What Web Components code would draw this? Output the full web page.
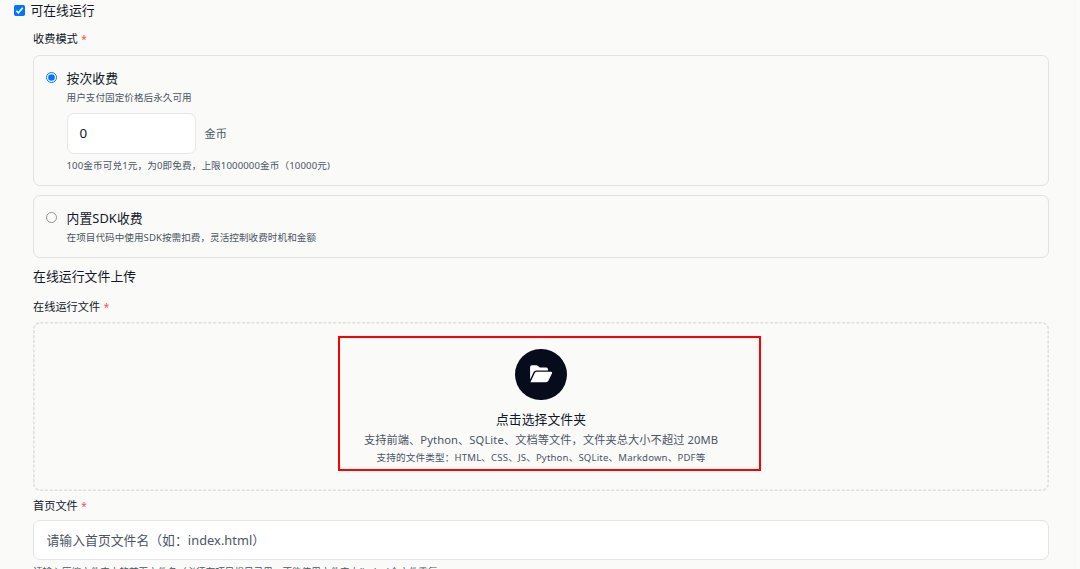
<!DOCTYPE html>
<html lang="zh-CN">
<head>
<meta charset="utf-8">
<title>在线运行设置</title>
<style>
  body {
    margin: 0;
    height: 569px;
    overflow: hidden;
    background: #fafaf9;
    color: #111827;
    font: 12.8px/19.2px "Noto Sans", "Noto Sans CJK SC", sans-serif;
  }
</style>
</head>
<body>
<run-settings>
  <check-row>可在线运行</check-row>
  <field-label style="margin-top: 9px">收费模式</field-label>
  <pay-option style="height: 129px; margin-top: 7px" checked label="按次收费" hint="用户支付固定价格后永久可用">
    <coin-input value="0" unit="金币" note="100金币可兑1元，为0即免费，上限1000000金币（10000元)"></coin-input>
  </pay-option>
  <pay-option style="height: 61px; margin-top: 9px" label="内置SDK收费" hint="在项目代码中使用SDK按需扣费，灵活控制收费时机和金额"></pay-option>
  <section-title>在线运行文件上传</section-title>
  <field-label style="margin-top: 11px">在线运行文件</field-label>
  <upload-zone>
    <span slot="title">点击选择文件夹</span>
    <span slot="desc">支持前端、Python、SQLite、文档等文件，文件夹总大小不超过 20MB</span>
    <span slot="types">支持的文件类型：HTML、CSS、JS、Python、SQLite、Markdown、PDF等</span>
  </upload-zone>
  <field-label style="margin-top: 6px">首页文件</field-label>
  <text-field placeholder="请输入首页文件名（如：index.html）">请输入压缩文件夹中的首页文件名（必须在项目根目录里，不能使用文件夹中(index)个文件重复</text-field>
</run-settings>

<script>
class RunSettings extends HTMLElement {
  constructor() {
    super();
    this.attachShadow({ mode: 'open' }).innerHTML = `
      <style>
        :host {
          display: flex;
          flex-direction: column;
          box-sizing: border-box;
          width: 1075px;
          height: 569px;
          padding: 1px 25px 0 33px;
          border-right: 1px solid #f7f7f6;
        }
        ::slotted(*) { flex: none; }
      </style>
      <slot></slot>
    `;
  }
}

class CheckRow extends HTMLElement {
  constructor() {
    super();
    this.attachShadow({ mode: 'open' }).innerHTML = `
      <style>
        :host { display: flex; align-items: center; gap: 6.5px; height: 20px; margin-left: -19.5px; }
        svg { width: 11px; height: 11px; flex: none; margin-top: -1px; }
        span { margin-left: -.5px; }
      </style>
      <svg viewBox="0 0 11 11">
        <rect width="11" height="11" rx="1.7" fill="#0075ff"/>
        <path d="M2.3 5.7 4.4 7.8 8.7 2.9" fill="none" stroke="#fff" stroke-width="1.6"/>
      </svg>
      <span><slot></slot></span>
    `;
  }
}

class FieldLabel extends HTMLElement {
  constructor() {
    super();
    this.attachShadow({ mode: 'open' }).innerHTML = `
      <style>
        :host { display: block; height: 18px; font-size: 11.2px; line-height: 17px; }
        i { color: #ef5350; font-style: normal; font-size: 10px; margin-left: .6px; }
      </style>
      <slot></slot> <i>*</i>
    `;
  }
}

class PayOption extends HTMLElement {
  connectedCallback() {
    const dot = this.hasAttribute('checked')
      ? '<circle cx="5.5" cy="5.5" r="5" fill="#fff" stroke="#0075ff"/><circle cx="5.5" cy="5.5" r="3.3" fill="#0075ff"/>'
      : '<circle cx="5.5" cy="5.5" r="5" fill="#fff" stroke="#767676" stroke-width=".8"/>';
    this.attachShadow({ mode: 'open' }).innerHTML = `
      <style>
        :host {
          display: flex;
          gap: 9.5px;
          border: 1px solid #e2e2e1;
          border-radius: 7px;
          padding: 0 12px;
          box-sizing: content-box;
        }
        svg { width: 11px; height: 11px; flex: none; margin-top: 16px; }
        .body { display: flex; flex-direction: column; padding-top: 12px; }
        .label { height: 21px; line-height: 20px; letter-spacing: .1px; }
        .hint { font-size: 9.6px; line-height: 17px; color: #4b5563; letter-spacing: .04px; }
      </style>
      <svg viewBox="0 0 11 11">${dot}</svg>
      <div class="body">
        <span class="label">${this.getAttribute('label')}</span>
        <span class="hint">${this.getAttribute('hint')}</span>
        <slot></slot>
      </div>
    `;
  }
}

class CoinInput extends HTMLElement {
  connectedCallback() {
    this.attachShadow({ mode: 'open' }).innerHTML = `
      <style>
        :host { display: block; margin-top: 7px; color: #4b5563; }
        .row { display: flex; align-items: center; gap: 9px; font-size: 11.2px; }
        .box {
          box-sizing: border-box;
          width: 129px;
          height: 41px;
          padding: 0 12px;
          border: 1px solid #e5e7eb;
          border-radius: 7px;
          background: #fff;
          color: #111827;
          font-size: 13.4px;
          line-height: 39px;
        }
        .note { font-size: 9.6px; line-height: 16px; margin-top: 4px; white-space: nowrap; letter-spacing: .12px; }
      </style>
      <div class="row"><span class="box">${this.getAttribute('value')}</span><span>${this.getAttribute('unit')}</span></div>
      <div class="note">${this.getAttribute('note')}</div>
    `;
  }
}

class SectionTitle extends HTMLElement {
  constructor() {
    super();
    this.attachShadow({ mode: 'open' }).innerHTML = `
      <style>
        :host { display: block; height: 20px; line-height: 19px; margin-top: 9px; letter-spacing: .1px; }
      </style>
      <slot></slot>
    `;
  }
}

class UploadZone extends HTMLElement {
  constructor() {
    super();
    this.attachShadow({ mode: 'open' }).innerHTML = `
      <style>
        :host {
          position: relative;
          display: flex;
          flex-direction: column;
          align-items: center;
          box-sizing: border-box;
          height: 169px;
          margin-top: 6px;
          padding-top: 26.5px;
        }
        .outline { position: absolute; inset: 0; width: 100%; height: 100%; }
        .outline rect {
          x: .8px;
          y: .8px;
          width: calc(100% - 1.6px);
          height: calc(100% - 1.6px);
          rx: 6.4px;
          fill: none;
          stroke: #e0e0df;
          stroke-width: 1.6px;
          stroke-dasharray: 3.2 1.6;
        }
        .icon {
          display: grid;
          place-items: center;
          width: 51.2px;
          height: 51.2px;
          margin-bottom: 10.8px;
          border-radius: 50%;
          background: #060c1b;
        }
        .icon svg { width: 24px; height: 20px; }
        .title { height: 20px; line-height: 19px; letter-spacing: .08px; }
        .desc { font-size: 11.2px; line-height: 20px; color: #4b5563; letter-spacing: .1px; }
        .types { font-size: 9.6px; line-height: 15px; color: #4b5563; letter-spacing: .16px; }
        /* red frame over the hint area */
        .mark {
          position: absolute;
          left: 305px;
          top: 13.5px;
          box-sizing: border-box;
          width: 423px;
          height: 135px;
          border: 2px solid #f00;
        }
      </style>
      <svg class="outline"><rect/></svg>
      <div class="icon">
        <svg viewBox="0 0 24 20" fill="#fff">
          <path d="M1.1 15.5V3.2Q1.1 1.2 3 1.2H7.4Q8.3 1.2 9 1.9L10.2 3Q10.8 3.6 11.7 3.6H17.2Q19 3.6 19 5.4V6.5H7.2Q5.5 6.5 4.7 8Z"/>
          <path d="M1.4 18.2 5.8 9Q6.4 7.7 7.8 7.7H22Q23.7 7.7 23 9.2L19.4 16.8Q18.7 18.2 17.1 18.2Z"/>
        </svg>
      </div>
      <div class="title"><slot name="title"></slot></div>
      <div class="desc"><slot name="desc"></slot></div>
      <div class="types"><slot name="types"></slot></div>
      <div class="mark"></div>
    `;
  }
}

class TextField extends HTMLElement {
  connectedCallback() {
    this.attachShadow({ mode: 'open' }).innerHTML = `
      <style>
        :host { display: block; margin-top: 5px; }
        .box {
          height: 38px;
          padding: 0 12.5px;
          border: 1px solid #e2e4e7;
          border-radius: 7px;
          background: #fff;
          color: #4b5563;
          line-height: 38px;
          letter-spacing: .05px;
        }
        .help { margin-top: 4px; font-size: 9.6px; line-height: 16px; color: #4b5563; white-space: nowrap; }
      </style>
      <div class="box">${this.getAttribute('placeholder')}</div>
      <div class="help"><slot></slot></div>
    `;
  }
}

customElements.define('run-settings', RunSettings);
customElements.define('check-row', CheckRow);
customElements.define('field-label', FieldLabel);
customElements.define('pay-option', PayOption);
customElements.define('coin-input', CoinInput);
customElements.define('section-title', SectionTitle);
customElements.define('upload-zone', UploadZone);
customElements.define('text-field', TextField);
</script>
</body>
</html>
